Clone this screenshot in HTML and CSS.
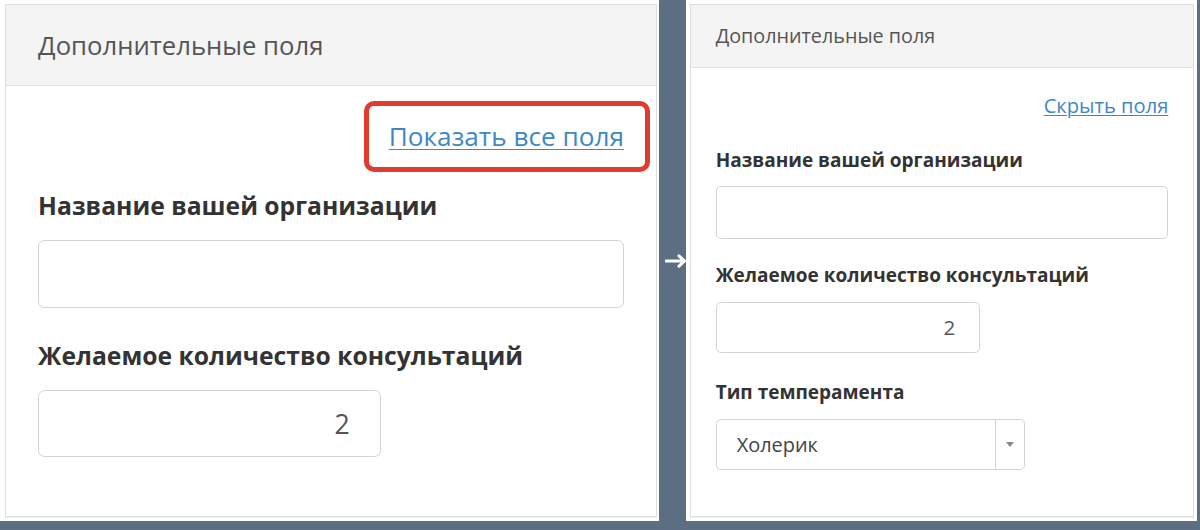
FILE: index.html
```html
<!DOCTYPE html>
<html lang="ru">
<head>
    <meta charset="UTF-8">
    <title>Дополнительные поля</title>
    <link rel="stylesheet" href="styles.css">
</head>
<body>
    <div class="compare">

        <!-- До: поля скрыты -->
        <div class="panel panel-big">
            <div class="card">
                <div class="card-header">Дополнительные поля</div>
                <div class="card-body">
                    <div class="toggle">
                        <a href="#" class="toggle-link marked">Показать все поля</a>
                    </div>
                    <div class="field">
                        <label class="field-label" for="org1">Название вашей организации</label>
                        <input type="text" id="org1" class="form-control">
                    </div>
                    <div class="field">
                        <label class="field-label" for="count1">Желаемое количество консультаций</label>
                        <input type="text" id="count1" class="form-control form-control-num" value="2">
                    </div>
                </div>
            </div>
        </div>

        <div class="divider">
            <svg class="divider-arrow" width="22" height="14" viewBox="0 0 22 14">
                <path d="M1 7H19.5M14 1.8L19.5 7L14 12.2" fill="none" stroke="#fff" stroke-width="3" stroke-linecap="round" stroke-linejoin="round"/>
            </svg>
        </div>

        <!-- После: все поля -->
        <div class="panel panel-small">
            <div class="card">
                <div class="card-header">Дополнительные поля</div>
                <div class="card-body">
                    <div class="toggle">
                        <a href="#" class="toggle-link">Скрыть поля</a>
                    </div>
                    <div class="field">
                        <label class="field-label" for="org2">Название вашей организации</label>
                        <input type="text" id="org2" class="form-control">
                    </div>
                    <div class="field">
                        <label class="field-label" for="count2">Желаемое количество консультаций</label>
                        <input type="text" id="count2" class="form-control form-control-num" value="2">
                    </div>
                    <div class="field field-select">
                        <label class="field-label" for="temper">Тип темперамента</label>
                        <div class="select-box">
                            <select id="temper" class="select-control">
                                <option selected>Холерик</option>
                                <option>Сангвиник</option>
                                <option>Флегматик</option>
                                <option>Меланхолик</option>
                            </select>
                            <span class="select-arrow"></span>
                        </div>
                    </div>
                </div>
            </div>
        </div>

    </div>
</body>
</html>
```

FILE: styles.css
```css
body {
    margin: 0;
    background-color: #5b6e82;
    font-family: "Open Sans", "DejaVu Sans", sans-serif;
}

.compare {
    display: flex;
    height: 521px;
}

.panel {
    background-color: #fff;
    box-sizing: border-box;
    display: flex;
}

.panel-big {
    width: 659px;
    padding: 4px 2px 4px 5px;
    font-size: 24.7px;
}

.panel-small {
    width: 511px;
    padding: 4px 3px 4px 4px;
    font-size: 19px;
}

.divider {
    width: 27px;
    display: flex;
    align-items: center;
    justify-content: flex-end;
}

.divider-arrow {
    display: block;
    margin-right: -1px;
}

.card {
    flex: 1;
    border: 1px solid #dddddd;
    box-shadow: 0 1px 0 #eeeeee;
    background-color: #fff;
}

.card-header {
    height: 3.17em;
    box-sizing: border-box;
    padding: 0 1.25em;
    display: flex;
    align-items: center;
    background-color: #f4f4f4;
    border-bottom: 1px solid #e2e2e2;
    color: #555;
    font-size: 1.04em;
}

.card-body {
    padding: 1.3em 1.3em 0;
    line-height: 1.3;
}

.toggle {
    text-align: right;
}

.toggle-link {
    font-size: 1.06em;
    color: #3f88c5;
    text-decoration: underline;
    text-underline-offset: 0.12em;
    text-decoration-thickness: 1px;
}

/* рамка-выделение на скриншоте */
.marked {
    position: relative;
}

.marked::after {
    content: "";
    position: absolute;
    top: -17px;
    bottom: -18px;
    left: -25px;
    right: -26px;
    border: 5px solid #e23a2f;
    border-radius: 10px;
}

.field {
    margin-top: 1.28em;
}

.toggle + .field {
    margin-top: 1.5em;
}

.field-select {
    margin-top: 1.42em;
}

.field-label {
    display: block;
    font-weight: bold;
    color: #333;
    margin-bottom: 0.75em;
}

.form-control {
    display: block;
    width: 100%;
    height: 2.75em;
    box-sizing: border-box;
    border: 1px solid #d3d3d3;
    border-radius: 0.25em;
    padding: 0 1.15em;
    font-family: inherit;
    font-size: 1em;
    color: #555;
    background-color: #fff;
}

.form-control-num {
    text-align: right;
    font-size: 1.08em;
    width: 12.87em;
    height: 2.48em;
}

.select-box {
    display: flex;
    width: 16.3em;
    height: 2.68em;
    box-sizing: border-box;
    border: 1px solid #d3d3d3;
    border-radius: 0.25em;
}

.select-control {
    flex: 1;
    appearance: none;
    -webkit-appearance: none;
    border: none;
    background: none;
    padding: 0 1em;
    font-family: inherit;
    font-size: 1.05em;
    color: #444;
    outline: none;
}

.select-arrow {
    width: 1.5em;
    border-left: 1px solid #d3d3d3;
    display: flex;
    align-items: center;
    justify-content: center;
}

.select-arrow::before {
    content: "";
    border-left: 4px solid transparent;
    border-right: 4px solid transparent;
    border-top: 5px solid #888;
}
```
